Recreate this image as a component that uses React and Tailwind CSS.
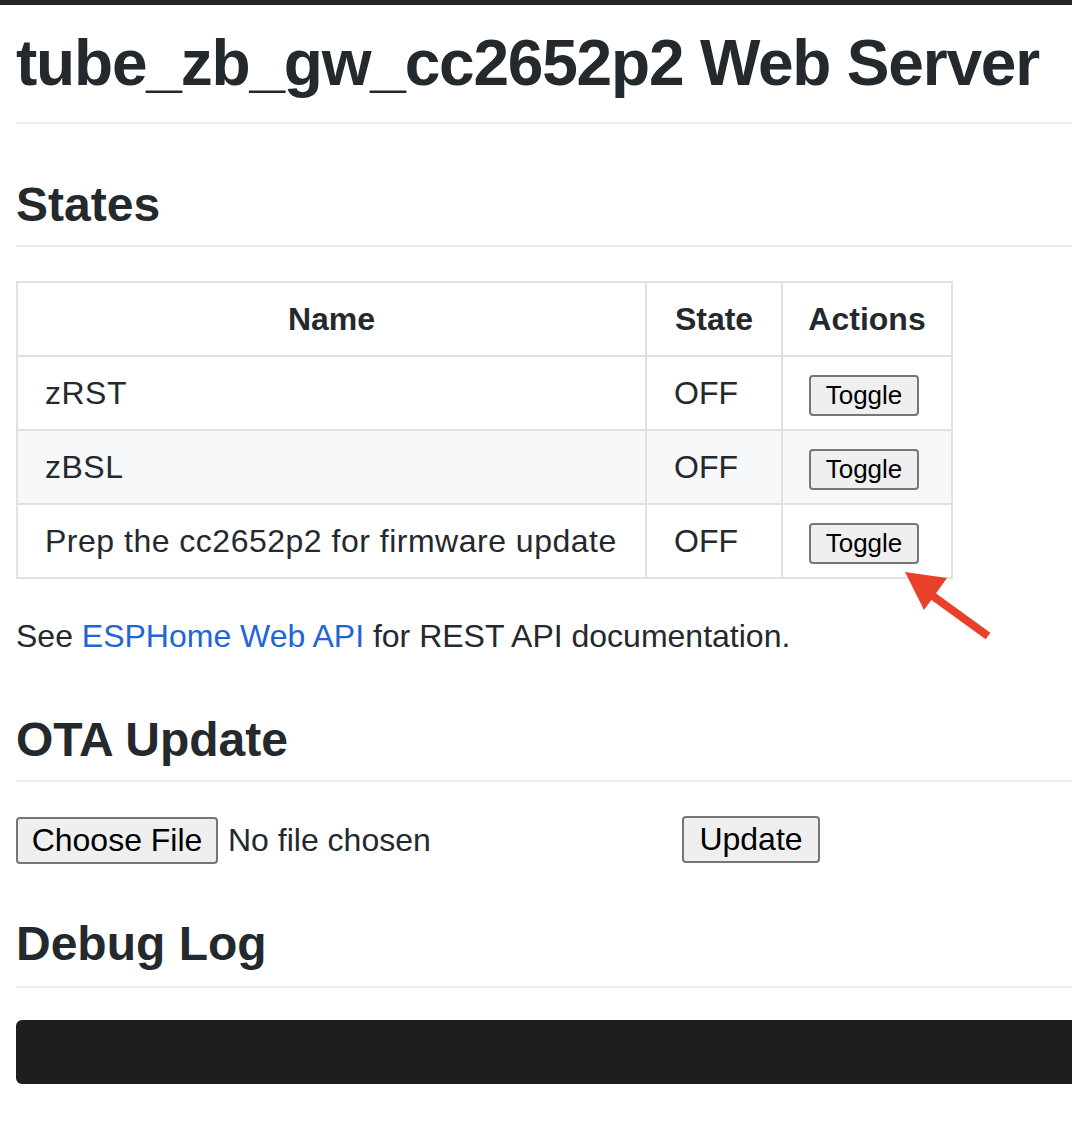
import React from "react";

const rows = [
  { name: "zRST", state: "OFF" },
  { name: "zBSL", state: "OFF" },
  { name: "Prep the cc2652p2 for firmware update", state: "OFF" },
];

const font = { fontFamily: '"Liberation Sans", Arial, sans-serif' };

const Heading = ({ children, className }) => (
  <h2 className={`font-bold text-[#24292e] border-b-2 border-[#eaecef] ${className}`}>{children}</h2>
);

const NativeButton = ({ children, className }) => (
  <button
    className={`bg-[#efefef] border-2 border-[#767676] rounded-[4px] text-black leading-none ${className}`}
  >
    {children}
  </button>
);

export default function App() {
  return (
    <div className="min-h-[1122px] bg-white overflow-hidden" style={font}>
      <div className="h-[5px] bg-[#262626]" />
      <div className="pl-4">
        <h1 className="text-[64px] leading-[80px] font-bold text-[#24292e] pt-[18px] pb-[19px] border-b-2 border-[#eaecef] tracking-[-1.2px]">
          tube_zb_gw_cc2652p2 Web Server
        </h1>

        <Heading className="text-[48px] leading-[60px] mt-[51px] pb-[10px]">States</Heading>

        <table className="mt-[34px] border-collapse text-[32px] text-[#24292e]">
          <thead>
            <tr>
              <th className="w-[629px] h-[74px] border-2 border-[#dfe2e5] font-bold">Name</th>
              <th className="w-[136px] h-[74px] border-2 border-[#dfe2e5] font-bold">State</th>
              <th className="w-[170px] h-[74px] border-2 border-[#dfe2e5] font-bold">Actions</th>
            </tr>
          </thead>
          <tbody>
            {rows.map((r, i) => (
              <tr key={r.name} className={i === 1 ? "bg-[#f6f8fa]" : "bg-white"}>
                <td className="h-[74px] border-2 border-[#dfe2e5] pl-[27px] tracking-[0.5px]">{r.name}</td>
                <td className="h-[74px] border-2 border-[#dfe2e5] pl-[27px]">{r.state}</td>
                <td className="h-[74px] border-2 border-[#dfe2e5] pl-[26px]">
                  <NativeButton className="w-[110px] h-[41px] text-[26px]">Toggle</NativeButton>
                </td>
              </tr>
            ))}
          </tbody>
        </table>

        <p className="mt-[37px] text-[32px] leading-[40px] text-[#24292e]">
          See <a className="text-[#2266d4]">ESPHome Web API</a> for REST API documentation.
        </p>

        <Heading className="text-[48px] leading-[60px] mt-[54px] pb-[10px]">OTA Update</Heading>

        <div className="flex items-center mt-[34px] h-[48px]">
          <NativeButton className="w-[202px] h-[47px] text-[32px]">Choose File</NativeButton>
          <span className="ml-[10px] text-[32px] text-[#24292e] w-[454px]">No file chosen</span>
          <NativeButton className="w-[138px] h-[47px] text-[32px] -mt-[2px]">Update</NativeButton>
        </div>

        <Heading className="text-[48px] leading-[60px] mt-[50px] pb-[12px]">Debug Log</Heading>

        <div className="mt-[32px] h-[64px] bg-[#1e1e1e] rounded-l-[6px]" />
      </div>

      <svg className="absolute left-[900px] top-[566px]" width="100" height="80" viewBox="0 0 100 80">
        <line x1="88" y1="70" x2="30" y2="28" stroke="#e8402a" strokeWidth="8" />
        <polygon points="5,6 47,12 24,44" fill="#e8402a" />
      </svg>
    </div>
  );
}
